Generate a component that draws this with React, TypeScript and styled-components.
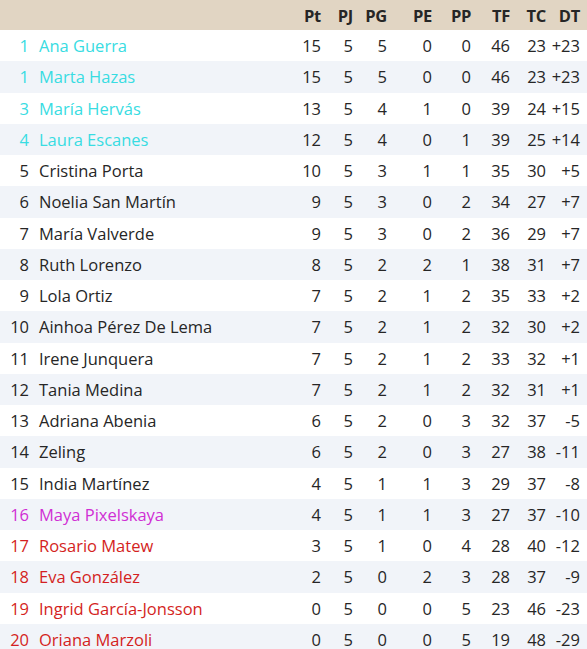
import React from 'react'
import styled, { createGlobalStyle } from 'styled-components'

const GlobalStyle = createGlobalStyle`
  body {
    margin: 0;
    background: #fff;
    font-family: 'Open Sans', 'Noto Sans', sans-serif;
  }
`

type Zone = 'top' | 'mid' | 'warn' | 'down'

interface Player {
  pos: number,
  name: string,
  stats: number[],
  zone: Zone,
}

const zoneColor: Record<Zone, string> = {
  top: '#38dce2',
  mid: '#262626',
  warn: '#d02fd4',
  down: '#d41f22',
}

const rows: Player[] = [
  { pos: 1, name: 'Ana Guerra', stats: [15, 5, 5, 0, 0, 46, 23, 23], zone: 'top' },
  { pos: 1, name: 'Marta Hazas', stats: [15, 5, 5, 0, 0, 46, 23, 23], zone: 'top' },
  { pos: 3, name: 'María Hervás', stats: [13, 5, 4, 1, 0, 39, 24, 15], zone: 'top' },
  { pos: 4, name: 'Laura Escanes', stats: [12, 5, 4, 0, 1, 39, 25, 14], zone: 'top' },
  { pos: 5, name: 'Cristina Porta', stats: [10, 5, 3, 1, 1, 35, 30, 5], zone: 'mid' },
  { pos: 6, name: 'Noelia San Martín', stats: [9, 5, 3, 0, 2, 34, 27, 7], zone: 'mid' },
  { pos: 7, name: 'María Valverde', stats: [9, 5, 3, 0, 2, 36, 29, 7], zone: 'mid' },
  { pos: 8, name: 'Ruth Lorenzo', stats: [8, 5, 2, 2, 1, 38, 31, 7], zone: 'mid' },
  { pos: 9, name: 'Lola Ortiz', stats: [7, 5, 2, 1, 2, 35, 33, 2], zone: 'mid' },
  { pos: 10, name: 'Ainhoa Pérez De Lema', stats: [7, 5, 2, 1, 2, 32, 30, 2], zone: 'mid' },
  { pos: 11, name: 'Irene Junquera', stats: [7, 5, 2, 1, 2, 33, 32, 1], zone: 'mid' },
  { pos: 12, name: 'Tania Medina', stats: [7, 5, 2, 1, 2, 32, 31, 1], zone: 'mid' },
  { pos: 13, name: 'Adriana Abenia', stats: [6, 5, 2, 0, 3, 32, 37, -5], zone: 'mid' },
  { pos: 14, name: 'Zeling', stats: [6, 5, 2, 0, 3, 27, 38, -11], zone: 'mid' },
  { pos: 15, name: 'India Martínez', stats: [4, 5, 1, 1, 3, 29, 37, -8], zone: 'mid' },
  { pos: 16, name: 'Maya Pixelskaya', stats: [4, 5, 1, 1, 3, 27, 37, -10], zone: 'warn' },
  { pos: 17, name: 'Rosario Matew', stats: [3, 5, 1, 0, 4, 28, 40, -12], zone: 'down' },
  { pos: 18, name: 'Eva González', stats: [2, 5, 0, 2, 3, 28, 37, -9], zone: 'down' },
  { pos: 19, name: 'Ingrid García-Jonsson', stats: [0, 5, 0, 0, 5, 23, 46, -23], zone: 'down' },
  { pos: 20, name: 'Oriana Marzoli', stats: [0, 5, 0, 0, 5, 19, 48, -29], zone: 'down' },
]

const headers = ['Pt', 'PJ', 'PG', 'PE', 'PP', 'TF', 'TC', 'DT']

const Table = styled.div`
  width: 587px;
  color: #262626;
  font-size: 16.5px;
`

const Row = styled.div<{ $alt?: boolean }>`
  display: grid;
  grid-template-columns: 29px 1fr 32px 32px 34px 45px 39px 39px 36px 34px;
  align-items: center;
  height: 31.25px;
  padding-right: 7px;
  background: ${p => (p.$alt ? '#f1f4f9' : '#fff')};
`

const HeadRow = styled(Row)`
  height: 30px;
  background: #e1d5c3;
  font-weight: 700;
  letter-spacing: -0.3px;
`

const Cell = styled.div`
  text-align: right;
  white-space: nowrap;
`

const Rank = styled(Cell)<{ $zone: Zone }>`
  color: ${p => zoneColor[p.$zone]};
`

const Name = styled.div<{ $zone: Zone }>`
  padding-left: 10px;
  color: ${p => zoneColor[p.$zone]};
  white-space: nowrap;
`

const fmtDiff = (n: number) => (n > 0 ? `+${n}` : `${n}`)

const App = () => {
  return (
    <>
      <GlobalStyle />
      <Table>
        <HeadRow>
          <div />
          <div />
          {headers.map(h => (
            <Cell key={h}>{h}</Cell>
          ))}
        </HeadRow>
        {rows.map((r, i) => (
          <Row key={r.name} $alt={i % 2 === 1}>
            <Rank $zone={r.zone}>{r.pos}</Rank>
            <Name $zone={r.zone}>{r.name}</Name>
            {r.stats.map((s, j) => (
              <Cell key={j}>{j === 7 ? fmtDiff(s) : s}</Cell>
            ))}
          </Row>
        ))}
      </Table>
    </>
  )
}

export default App
